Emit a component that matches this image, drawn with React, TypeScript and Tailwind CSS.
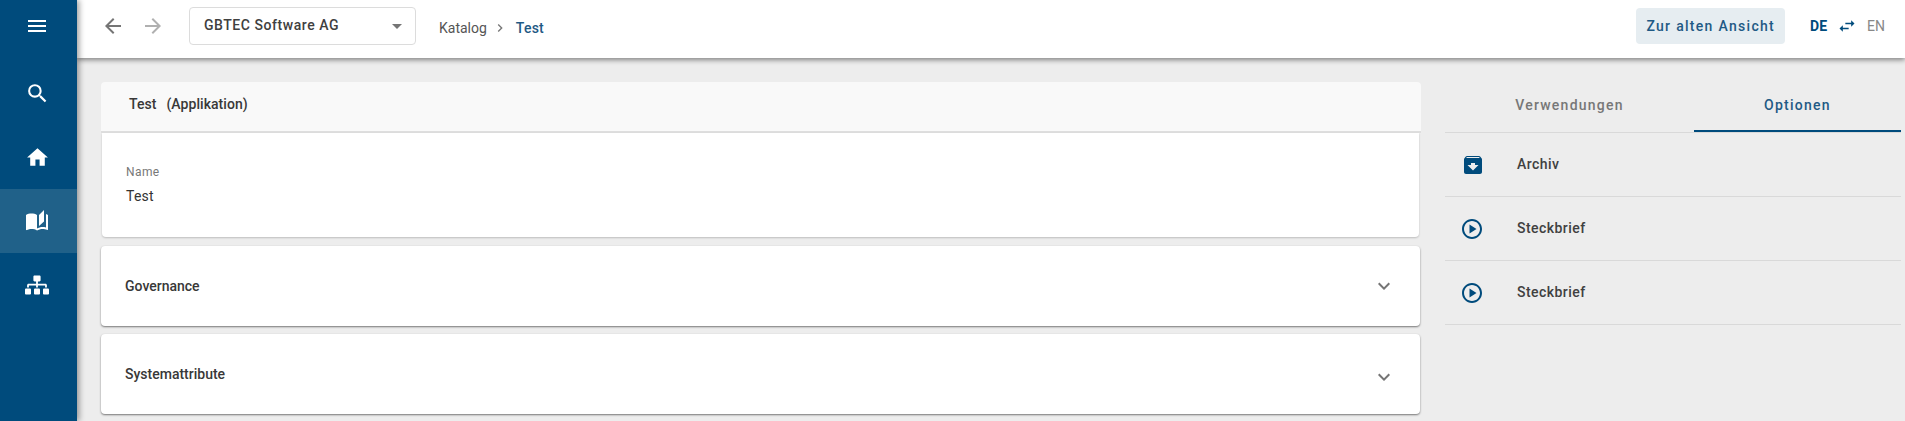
import { MdMenu, MdSearch, MdHome, MdAutoStories, MdArrowBack, MdArrowForward, MdArrowDropDown, MdChevronRight, MdExpandMore, MdSwapHoriz, MdOutlinePlayCircle, MdArchive } from 'react-icons/md';
import { FaSitemap } from 'react-icons/fa';

function Accordion({ title, chevronClass }: { title: string; chevronClass: string }) {
  return (
    <div className="h-20 mr-px rounded bg-white pl-[24px] pr-[24px] flex items-center justify-between shadow-[0_1px_2px_rgba(0,0,0,0.5)]">
      <span className="text-[14px] font-medium text-[#383838]">{title}</span>
      <MdExpandMore className={chevronClass} />
    </div>
  );
}

function OptionRow({ icon, label }: { icon: React.ReactNode; label: string }) {
  return (
    <div className="h-16 flex items-center border-b border-[#d9d9d9]">
      <div className="w-[72px] pl-[15px] text-[#004b7c] text-[24px]">{icon}</div>
      <span className="-mt-px text-[14px] font-medium tracking-[0.45px] text-[#404040]">{label}</span>
    </div>
  );
}

export default function App() {
  return (
    <div className="flex h-[421px] w-full overflow-hidden bg-[#ededed] font-['Roboto',sans-serif]">
      <aside className="relative z-20 w-[77px] shrink-0 bg-[#004b7c] text-white shadow-[2px_0_6px_rgba(0,0,0,0.4)]">
        <div className="h-[61px] pl-[25px] pt-[14px]">
          <MdMenu className="text-[24px]" />
        </div>
        <div className="h-16 flex items-center pl-[25px]">
          <MdSearch className="text-[25px]" />
        </div>
        <div className="h-16 flex items-center pl-[25px]">
          <MdHome className="text-[25px]" />
        </div>
        <div className="h-16 flex items-center pl-[25px] bg-[#206189]">
          <MdAutoStories className="text-[24px]" />
        </div>
        <div className="h-16 flex items-center pl-[25px]">
          <FaSitemap className="text-[24px]" />
        </div>
      </aside>

      <div className="flex-1 min-w-0 flex flex-col">
        <header className="relative z-10 h-[58px] shrink-0 bg-white flex items-center pb-[6px] shadow-[0_2px_5px_rgba(0,0,0,0.45)]">
          <MdArrowBack className="ml-[24px] text-[24px] text-[#757575]" />
          <MdArrowForward className="ml-[16px] text-[24px] text-[#b0b0b0]" />
          <div className="ml-[24px] h-[38px] w-[227px] rounded border border-[#dcdcdc] flex items-center justify-between pl-[14px] pr-[6px]">
            <span className="-mt-[2px] text-[14px] font-medium tracking-[0.55px] text-[#404040]">GBTEC Software AG</span>
            <MdArrowDropDown className="text-[24px] text-[#757575]" />
          </div>
          <div className="ml-[23px] mt-[4px] flex items-center text-[14px]">
            <span className="text-[#555]">Katalog</span>
            <MdChevronRight className="ml-[5px] mr-[8px] text-[16px] text-[#777]" />
            <span className="font-medium tracking-[0.2px] text-[#1f5a85]">Test</span>
          </div>
          <div className="ml-auto h-9 px-[10px] rounded bg-[#e6edf1] flex items-center text-[14px] font-medium tracking-[1.3px] text-[#1f5a85]">
            Zur alten Ansicht
          </div>
          <div className="ml-[25px] mr-[20px] flex items-center text-[14px]">
            <span className="font-bold text-[#004b7c]">DE</span>
            <MdSwapHoriz className="ml-[10px] mr-[10px] text-[20px] text-[#004b7c]" />
            <span className="text-[#888]">EN</span>
          </div>
        </header>

        <main className="flex-1 min-h-0 flex pt-[24px] pl-[24px] pr-[4px] gap-[24px]">
          <div className="w-[1320px] shrink-0 flex flex-col">
            <div className="h-[51px] shrink-0 rounded-t bg-[#f9f9f9] border-b-2 border-[#dedede] flex items-center pl-[28px] pb-[4px] text-[14px] font-medium tracking-[0.05px] text-[#383838]">
              <span>Test</span>
              <span className="ml-[10px]">(Applikation)</span>
            </div>
            <div className="h-[104px] shrink-0 ml-px mr-[2px] rounded-b bg-white pl-[24px] pt-[32px] shadow-[0_1px_2px_rgba(0,0,0,0.2)]">
              <div className="text-[12px] leading-[14px] tracking-[0.4px] text-[#777]">Name</div>
              <div className="mt-[8px] text-[14px] leading-[18px] tracking-[0.25px] text-[#333]">Test</div>
            </div>
            <div className="mt-[9px] flex flex-col gap-[8px]">
              <Accordion title="Governance" chevronClass="text-[24px] text-[#757575]" />
              <Accordion title="Systemattribute" chevronClass="mt-[5px] text-[24px] text-[#757575]" />
            </div>
          </div>

          <div className="flex-1 min-w-0">
            <div className="h-[51px] flex border-b border-[#d9d9d9] text-[14px] font-medium tracking-[1.25px]">
              <div className="flex-1 flex items-center justify-center pb-[3px] text-[#777]">Verwendungen</div>
              <div className="w-[207px] flex items-center justify-center pb-[1px] text-[#1f5a85] border-b-2 border-[#004b7c]">Optionen</div>
            </div>
            <OptionRow icon={<MdArchive className="ml-px" />} label="Archiv" />
            <OptionRow icon={<MdOutlinePlayCircle />} label="Steckbrief" />
            <OptionRow icon={<MdOutlinePlayCircle />} label="Steckbrief" />
          </div>
        </main>
      </div>
    </div>
  );
}
